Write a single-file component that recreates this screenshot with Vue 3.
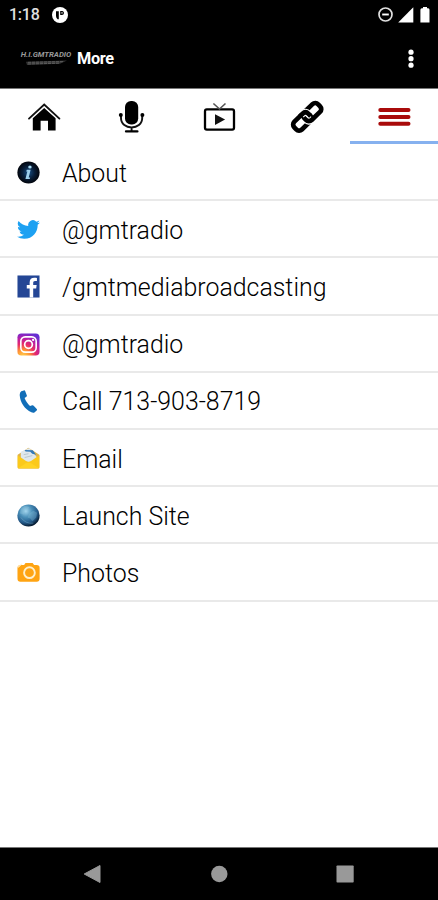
<script setup>
const items = [
  { icon: 'info', label: 'About' },
  { icon: 'twitter', label: '@gmtradio' },
  { icon: 'facebook', label: '/gmtmediabroadcasting' },
  { icon: 'instagram', label: '@gmtradio' },
  { icon: 'phone', label: 'Call 713-903-8719' },
  { icon: 'mail', label: 'Email' },
  { icon: 'globe', label: 'Launch Site' },
  { icon: 'camera', label: 'Photos' },
]
</script>

<template>
  <div class="screen">
    <header class="top">
      <div class="status">
        <span class="time">1:18</span>
        <svg class="app-dot" width="16" height="16" viewBox="0 0 16 16">
          <circle cx="8" cy="8" r="8" fill="#fff" />
          <path d="M4 4.2h2.8v8H5.6Q4 11 4 9zM8.2 4h2.2a2 2 0 0 1 1.6 2 2 2 0 0 1-2 1.9H8.2z" fill="#000" />
          <circle cx="10" cy="5.9" r=".8" fill="#bbb" />
        </svg>
        <svg class="dnd" width="15" height="15" viewBox="0 0 15 15">
          <circle cx="7.5" cy="7.5" r="6.5" fill="none" stroke="#e0e0e0" stroke-width="1.7" />
          <path d="M4.2 7.5h6.6" stroke="#fff" stroke-width="1.9" />
        </svg>
        <svg class="signal" width="16" height="16" viewBox="0 0 16 16"><path d="M15.3.3v15.2H.2z" fill="#fff" /></svg>
        <svg class="battery" width="10" height="16" viewBox="0 0 10 16"><path d="M3 0h4v1.2h1.2Q9.5 1.3 9.5 2.8V15.5H.4V2.8Q.5 1.3 1.8 1.2H3z" fill="#fff" /></svg>
      </div>
      <div class="appbar">
        <div class="brand">
          <span class="brand-name">H.I.GMTRADIO</span>
          <svg width="44" height="6" viewBox="0 0 44 6"><path d="M2 1.8 43 .5 36 3.8 3 5z" fill="#333" /><path d="M4 2.3 39 1.6M4 4 36 3.2" stroke="#777" stroke-width=".6" stroke-dasharray="3 1" /></svg>
        </div>
        <h1>More</h1>
        <svg class="dots" width="6" height="20" viewBox="0 0 6 20" fill="#fff"><circle cx="3" cy="3.2" r="2.6" /><circle cx="3" cy="9.7" r="2.6" /><circle cx="3" cy="16.2" r="2.6" /></svg>
      </div>
    </header>

    <nav class="tabs">
      <div class="tab">
        <svg width="36" height="36" viewBox="0 0 36 36">
          <path d="M3 19.6 18.2 5.6l15.2 14" fill="none" stroke="#111" stroke-width="1.9" stroke-linecap="round" />
          <path d="M6.8 19.3 18.2 9l11.4 10.3V31.6h-7.6v-9.8h-7.4v9.8H6.8z" fill="#000" />
        </svg>
      </div>
      <div class="tab">
        <svg width="36" height="36" viewBox="0 0 36 36">
          <rect x="12" y="2" width="13.2" height="23.6" rx="6" fill="#000" />
          <path d="M8 16v3c0 12.6 21.2 12.6 21.2 0v-3M18.6 28.3v4" fill="none" stroke="#111" stroke-width="1.9" />
          <path d="M13 32.4h11.4" stroke="#000" stroke-width="2.3" stroke-linecap="round" />
          <circle cx="7.8" cy="15.9" r="2" /><circle cx="29.4" cy="15.9" r="2" />
        </svg>
      </div>
      <div class="tab">
        <svg width="36" height="36" viewBox="0 0 36 36">
          <rect x="4" y="10.4" width="29" height="20.2" rx="1.8" fill="none" stroke="#000" stroke-width="2.3" />
          <path d="m12.4 4.5 6.1 5.5 6-5.5" fill="none" stroke="#555" stroke-width="1.6" />
          <path d="M14 15.2v10.7l10.1-5.3z" fill="#111" />
        </svg>
      </div>
      <div class="tab">
        <svg width="36" height="36" viewBox="0 0 36 36">
          <g transform="translate(18.2 17.8) rotate(-44)" fill="none" stroke-linejoin="round">
            <rect x="-16.6" y="-5.4" width="19.6" height="10.8" rx="4" stroke="#000" stroke-width="4.7" />
            <path d="M3 5.4H.8Q-3 5.4-3 1.2V-.6" stroke="#fff" stroke-width="6.8" />
            <rect x="-3" y="-5.4" width="19.6" height="10.8" rx="4" stroke="#000" stroke-width="4.7" />
            <path d="M-3-5.4H-.8Q3-5.4 3-1.2V.6" stroke="#fff" stroke-width="6.8" />
            <path d="M-5-5.4H-1.2Q3-5.4 3-1.2V1.4" stroke="#000" stroke-width="4.7" />
          </g>
        </svg>
      </div>
      <div class="tab active">
        <svg width="36" height="36" viewBox="0 0 36 36"><path d="M4.3 11h28.2M4.3 18h28.2M4.3 24.8h28.2" stroke="#a90b0b" stroke-width="4" stroke-linecap="round" /></svg>
      </div>
    </nav>

    <main>
      <div v-for="(item, i) in items" :key="i" class="row">
        <svg class="row-icon" width="24" height="24" viewBox="0 0 24 24">
          <defs>
            <radialGradient id="infoFill"><stop offset="0" stop-color="#174f86" /><stop offset=".55" stop-color="#071d38" /><stop offset="1" stop-color="#02050c" /></radialGradient>
            <radialGradient id="instaFill" cx=".25" cy="1.05" r="1.1"><stop offset="0" stop-color="#ffd34e" /><stop offset=".28" stop-color="#ff9434" /><stop offset=".52" stop-color="#e72b68" /><stop offset=".77" stop-color="#b51daa" /><stop offset="1" stop-color="#662fd2" /></radialGradient>
            <radialGradient id="globeFill" cx=".38" cy=".3" r=".7"><stop offset="0" stop-color="#a5d7ef" /><stop offset=".4" stop-color="#4a8fb8" /><stop offset=".75" stop-color="#245b8b" /><stop offset="1" stop-color="#061b31" /></radialGradient>
          </defs>
          <template v-if="item.icon === 'info'">
            <circle cx="12" cy="12" r="11.6" fill="url(#infoFill)" />
            <path d="M10.3 9.2h3.9l-2 8h1.5l-.4 1.6H8.8l2-7.9H9.5z" fill="#9dd0ed" />
            <ellipse cx="13.5" cy="6.2" rx="1.8" ry="1.6" fill="#aadcf3" />
          </template>
          <path v-else-if="item.icon === 'twitter'" fill="#1da1f2" d="M23.95 4.57a10 10 0 0 1-2.82.77 4.96 4.96 0 0 0 2.16-2.72c-.95.55-2 .96-3.13 1.18a4.92 4.92 0 0 0-8.38 4.48C7.69 8.1 4.07 6.13 1.64 3.16a4.92 4.92 0 0 0 1.52 6.57 4.9 4.9 0 0 1-2.23-.61v.06a4.92 4.92 0 0 0 3.95 4.83 5 5 0 0 1-2.21.08 4.94 4.94 0 0 0 4.6 3.42A9.87 9.87 0 0 1 0 19.54a13.99 13.99 0 0 0 7.56 2.21c9.05 0 14-7.5 14-13.98 0-.21 0-.42-.02-.63a9.94 9.94 0 0 0 2.41-2.57z" />
          <template v-else-if="item.icon === 'facebook'">
            <rect x=".5" y=".5" width="23" height="23" fill="#244695" />
            <path d="M13.2 23.5V14h-3v-3.6h3V7.7c0-3.3 2-4.8 4.8-4.8 1.3 0 2.3.1 2.8.2v3.2h-1.9c-1.6 0-2 .8-2 2v2.1h3.6l-.5 3.6h-3.1v9.5z" fill="#fff" />
          </template>
          <template v-else-if="item.icon === 'instagram'">
            <rect x=".5" y=".5" width="23" height="23" rx="4" fill="url(#instaFill)" />
            <rect x="4" y="4" width="16" height="16" rx="4.5" fill="none" stroke="#fff" stroke-width="1.7" />
            <circle cx="12" cy="12" r="4" fill="none" stroke="#fff" stroke-width="1.8" /><circle cx="16.8" cy="7.2" r="1.2" fill="#fff" />
          </template>
          <path v-else-if="item.icon === 'phone'" fill="#126eb8" d="M4.4 1.2 7.2.4q1-.2 1.4.8l1.7 4.5q.2.9-.5 1.4L7.9 8.4c1.2 3.2 3.2 6 5.7 8.3l2.3-.8q.9-.2 1.5.5l3.2 3.4q.6.8-.1 1.5l-2 1.8q-1.4 1-3.5.1C8 20.1 3.3 13 2.8 5.2q0-2.9 1.6-4z" />
          <template v-else-if="item.icon === 'mail'">
            <path d="M.7 8 12 .8 23.3 8v13.4q0 1-1 1H1.7q-1 0-1-1z" fill="#deb34e" />
            <path d="m4 5 9-4 8 10-8 6-9-4z" fill="#dfe7ec" />
            <path d="m8 3 8.5.4 3.4 4.6-4-.9-2.1-2.1-4.9-.2z" fill="#3278b8" />
            <path d="m7 8 5-1m-4 4 8-2" stroke="#b7c6cd" stroke-width="1" />
            <path d="M.7 8.6 9 14.4q3 1.8 6 0l8.3-5.8v12.6q0 1.2-1.2 1.2H1.9Q.7 22.4.7 21.2z" fill="#fbc91b" />
            <path d="m1.4 21.9 8-4.9q2.6-1.4 5.2 0l8 4.9" fill="#ffd324" />
          </template>
          <template v-else-if="item.icon === 'globe'">
            <circle cx="12" cy="12" r="11.6" fill="url(#globeFill)" />
            <path d="m4 5 4-3 5 1-2 3-3 1-1 4-4-1zM13 10l4-3 4 2-1 5-4 4-2-3-3-1z" fill="#91c7df" opacity=".3" />
            <path d="M4 14q5 7 13 6" fill="none" stroke="#86bad6" stroke-width="1" opacity=".4" />
          </template>
          <template v-else>
            <path d="M3.4 4.3h4l1.5-2.2h7.4l1.5 2.2h2.8q3 0 3 3v11.3q0 3-3 3H3.5q-3 0-3-3V7.2q0-2.5 2.9-2.9z" fill="#ffa412" />
            <circle cx="13" cy="12.2" r="5.6" fill="#ffa412" stroke="#fff0cc" stroke-width="2" /><path d="M1 6.6 5 3.1" stroke="#fff0cc" stroke-width="1.1" />
          </template>
        </svg>
        <span>{{ item.label }}</span>
      </div>
    </main>

    <footer>
      <svg width="18" height="20" viewBox="0 0 18 20"><path d="M1.2 10 17 1.5v17z" fill="#999" stroke="#999" stroke-linejoin="round" /></svg>
      <svg width="18" height="20" viewBox="0 0 18 20"><circle cx="9.3" cy="10" r="8.2" fill="#999" /></svg>
      <svg width="18" height="20" viewBox="0 0 18 20"><rect x=".5" y="1.4" width="17.2" height="17.2" rx=".8" fill="#999" /></svg>
    </footer>
  </div>
</template>

<style>
body { margin: 0; background: #fff; }
</style>

<style scoped>
.screen { width: 438px; height: 900px; display: flex; flex-direction: column; background: #fff; font-family: Roboto, sans-serif; overflow: hidden; }
.top { height: 89px; box-sizing: border-box; background: #000; border-bottom: 1px solid #777; color: #fff; flex: none; }
.status { height: 29px; display: flex; align-items: center; padding: 0 8px 0 9px; box-sizing: border-box; }
.time { width: 42px; font-size: 16px; font-weight: 500; letter-spacing: -.25px; color: #e0e0e0; }
.app-dot { margin-left: .5px; }
.dnd { margin-left: auto; }
.signal { margin-left: 5px; }
.battery { margin-left: 6px; }
.appbar { height: 59px; display: flex; align-items: center; padding: 0 24px 0 20px; }
.brand { width: 52px; height: 18px; display: flex; flex-direction: column; align-items: center; }
.brand-name { font-size: 7.8px; line-height: 10px; font-weight: 700; font-style: italic; color: #999; white-space: nowrap; }
h1 { margin: 0 0 0 5px; font-size: 16.3px; line-height: 20px; font-weight: 700; letter-spacing: -.3px; }
.dots { margin-left: auto; }
.tabs { height: 55px; display: grid; grid-template-columns: repeat(5, 1fr); flex: none; }
.tab { display: flex; justify-content: center; align-items: flex-start; padding-top: 10px; box-sizing: border-box; }
.tab.active { border-bottom: 3px solid #86b1ef; }
main { flex: 1; }
.row { height: 57.2px; box-sizing: border-box; border-bottom: 2px solid #e9e9e9; display: flex; align-items: center; padding: 2px 0 0 17px; color: #000; }
.row-icon { width: 23px; height: 23px; flex: none; }
.row span { margin-left: 22px; padding-top: 2px; font-size: 24.9px; line-height: 30px; font-weight: 330; white-space: nowrap; }
footer { height: 53px; box-sizing: border-box; background: #000; border-top: 1px solid #777; display: flex; align-items: center; justify-content: space-between; padding: 0 84px 0 83px; flex: none; }
</style>
